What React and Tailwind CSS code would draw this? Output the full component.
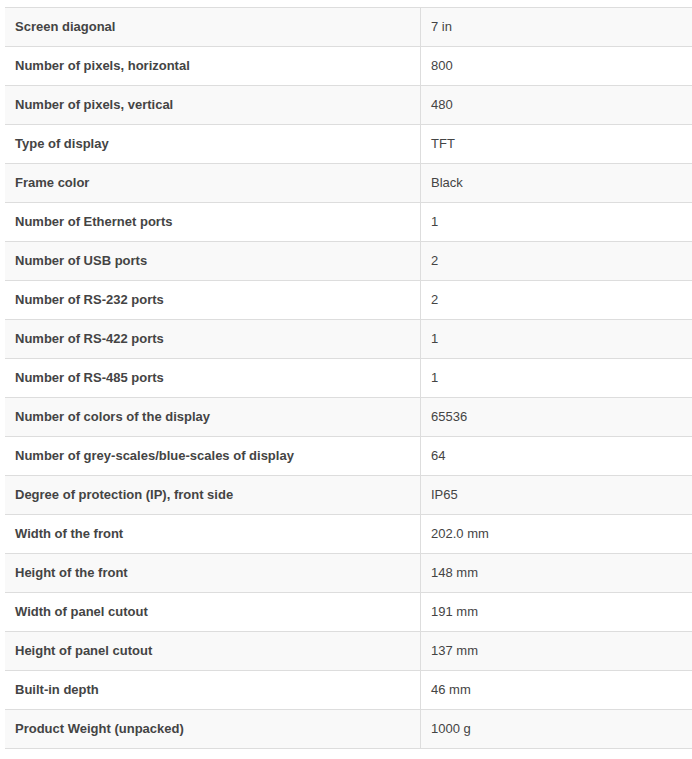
const specs = [
  ['Screen diagonal', '7 in'],
  ['Number of pixels, horizontal', '800'],
  ['Number of pixels, vertical', '480'],
  ['Type of display', 'TFT'],
  ['Frame color', 'Black'],
  ['Number of Ethernet ports', '1'],
  ['Number of USB ports', '2'],
  ['Number of RS-232 ports', '2'],
  ['Number of RS-422 ports', '1'],
  ['Number of RS-485 ports', '1'],
  ['Number of colors of the display', '65536'],
  ['Number of grey-scales/blue-scales of display', '64'],
  ['Degree of protection (IP), front side', 'IP65'],
  ['Width of the front', '202.0 mm'],
  ['Height of the front', '148 mm'],
  ['Width of panel cutout', '191 mm'],
  ['Height of panel cutout', '137 mm'],
  ['Built-in depth', '46 mm'],
  ['Product Weight (unpacked)', '1000 g'],
];

export default function App() {
  return (
    <div className="min-h-[759px] bg-white pt-[7px] pl-[5px] text-[13px] text-[#444] font-['Liberation_Sans',Arial,sans-serif]">
      <div className="border-b border-[#ddd]">
        {specs.map(([label, value], i) => (
          <div
            key={label}
            className={`flex h-[39px] border-t border-[#ddd] ${i % 2 === 0 ? 'bg-[#f9f9f9]' : 'bg-white'}`}
          >
            <div className="w-[415px] shrink-0 flex items-center px-[10px] font-bold">{label}</div>
            <div className="flex-1 flex items-center border-l border-[#ddd] px-[10px]">{value}</div>
          </div>
        ))}
      </div>
    </div>
  );
}
